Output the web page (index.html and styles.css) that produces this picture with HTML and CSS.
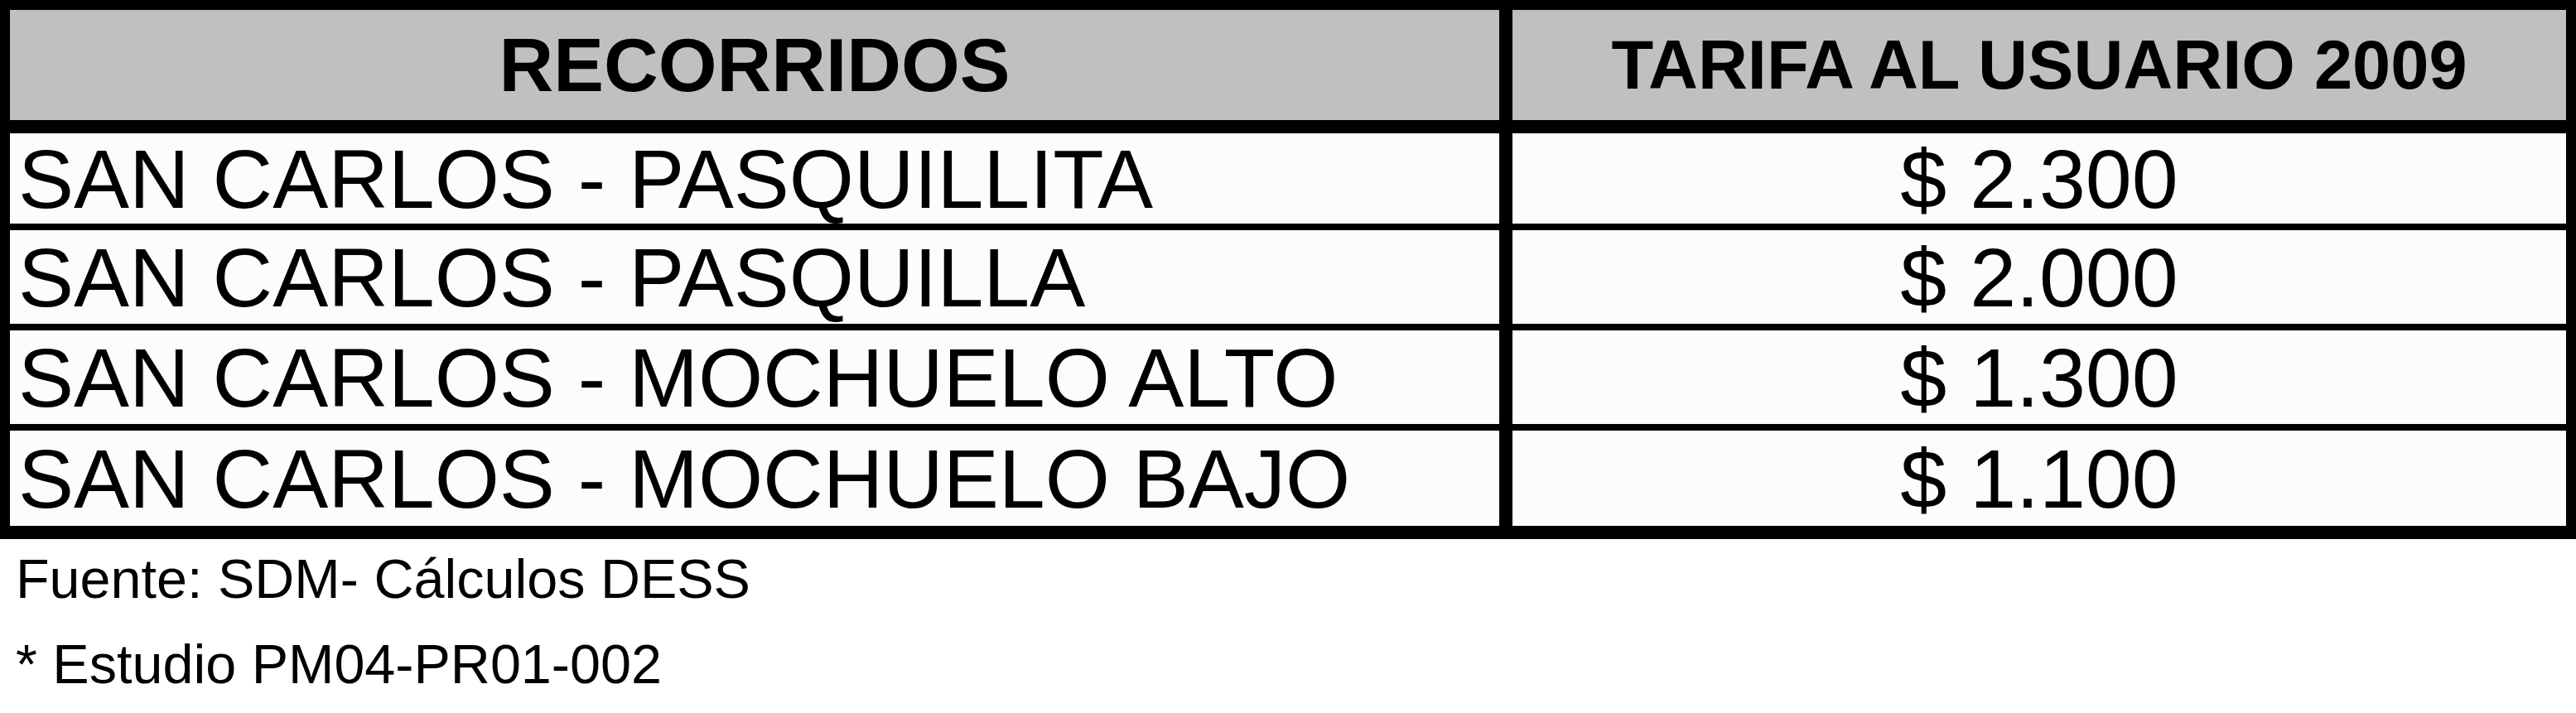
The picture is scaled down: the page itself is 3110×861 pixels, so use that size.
FILE: index.html
```html
<!DOCTYPE html>
<html lang="es">
<head>
<meta charset="utf-8">
<title>Tarifas</title>
<link rel="stylesheet" href="styles.css">
</head>
<body>
<div class="tabla">
  <div class="celda cab cab-rec">RECORRIDOS</div>
  <div class="celda cab cab-tar">TARIFA AL USUARIO 2009</div>
  <div class="celda nombre">SAN CARLOS - PASQUILLITA</div>
  <div class="celda precio">$ 2.300</div>
  <div class="celda nombre">SAN CARLOS - PASQUILLA</div>
  <div class="celda precio">$ 2.000</div>
  <div class="celda nombre">SAN CARLOS - MOCHUELO ALTO</div>
  <div class="celda precio">$ 1.300</div>
  <div class="celda nombre">SAN CARLOS - MOCHUELO BAJO</div>
  <div class="celda precio">$ 1.100</div>
</div>
<div class="notas">
  <p class="nota">Fuente: SDM- Cálculos DESS</p>
  <p class="nota">* Estudio PM04-PR01-002</p>
</div>
</body>
</html>
```
FILE: styles.css
```css
html, body {
  margin: 0;
  padding: 0;
  background: #ffffff;
}
body {
  font-family: "Liberation Sans", Arial, sans-serif;
  color: #000000;
  width: 3110px;
}
.tabla {
  display: grid;
  grid-template-columns: 1798px 1272px;
  grid-template-rows: 141px 109px 113px 113px 115px;
  column-gap: 16px;
  row-gap: 8px;
  padding: 12px 12px 16px 12px;
  background: #000000;
}
.celda {
  display: flex;
  align-items: center;
  background: #fcfcfc;
  line-height: 100px;
  font-size: 100.5px;
  white-space: nowrap;
  overflow: hidden;
}
.cab {
  background: #c0c0c0;
  font-weight: bold;
  justify-content: center;
  margin-bottom: 8px;
}
.cab-rec {
  font-size: 91px;
}
.cab-tar {
  font-size: 83px;
}
.nombre {
  padding-left: 10px;
}
.precio {
  justify-content: center;
}
.notas {
  display: flex;
  flex-direction: column;
  gap: 37px;
  padding: 15px 0 0 19px;
}
.nota {
  margin: 0;
  font-size: 66.5px;
  line-height: 66px;
  white-space: nowrap;
}
```
